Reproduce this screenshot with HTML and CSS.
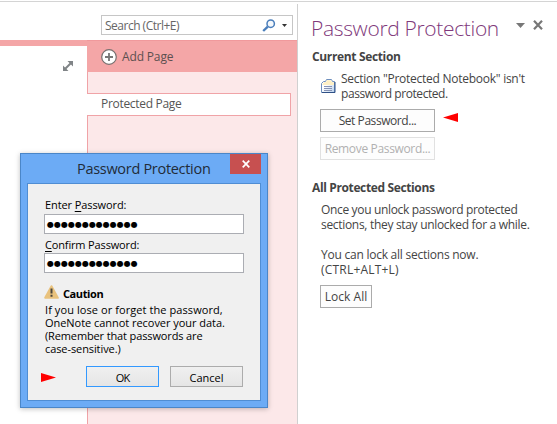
FILE: index.html
```html
<!DOCTYPE html>
<html lang="en">
<head>
<meta charset="utf-8">
<title>Password Protection</title>
<link rel="stylesheet" href="styles.css">
</head>
<body>
<div class="app">
  <main class="notebook">
    <div class="toolbar">
      <div class="search">
        <span class="search-text">Search (Ctrl+E)</span>
        <svg class="search-icon" width="14" height="13" viewBox="0 0 14 13"><circle cx="8.7" cy="4.7" r="3.7" fill="#f4f8fc" stroke="#4a7ebb" stroke-width="1.5"/><path d="M5.8 7.6L1.2 12" stroke="#4a7ebb" stroke-width="2.4"/></svg>
        <svg class="search-caret" width="5" height="3" viewBox="0 0 5 3"><path d="M0 0h5L2.5 3z" fill="#333"/></svg>
      </div>
    </div>
    <div class="workspace">
      <section class="canvas">
        <svg width="12" height="12" viewBox="0 0 12 12"><path d="M2.5 9.5l7-7" stroke="#808487" stroke-width="2"/><path d="M5.5 1H11v5.5zM1 5.5V11h5.5z" fill="#808487"/></svg>
      </section>
      <aside class="pages">
        <div class="add-page">
          <svg width="16" height="16" viewBox="0 0 16 16"><circle cx="8" cy="8" r="7.3" fill="#fff" stroke="#77706f" stroke-width="1.2"/><path d="M8 4v8M4 8h8" stroke="#777" stroke-width="1.8"/></svg>
          <span class="add-text">Add Page</span>
        </div>
        <div class="page-list"><div class="page-tab">Protected Page</div></div>
      </aside>
    </div>
  </main>

  <aside class="pane">
    <header class="pane-head">
      <h1>Password Protection</h1>
      <svg class="pane-caret" width="9" height="5" viewBox="0 0 9 5"><path d="M0 0h9L4.5 5z" fill="#777"/></svg>
      <svg class="pane-close" width="10" height="10" viewBox="0 0 10 10"><path d="M1 .8l8 8.4M9 .8L1 9.2" stroke="#777" stroke-width="2.2"/></svg>
    </header>
    <h2 class="current">Current Section</h2>
    <div class="status">
      <svg width="15" height="15" viewBox="0 0 15 15"><defs><linearGradient id="g" x1="0" y1="0" x2="1" y2="1"><stop offset=".4" stop-color="#fff"/><stop offset="1" stop-color="#b5cdea"/></linearGradient></defs><path d="M.5 13.500V4.500L2.500 2.500H4.500L5.500.5H10.500L11.500 2.500H13.500V13.500z" fill="url(#g)" stroke="#6e8fbd"/><path d="M1.500 5L3 3.200H5L6 1.300h4l1 1.900h2V6H1.500z" fill="#fff0c4"/><path d="M3 7.500h8M3 9.500h8M3 11.500h8" stroke="#8793b4"/><path d="M1 13.500h13V3" fill="none" stroke="#2f5086"/></svg>
      <p><span class="s-name">Section "Protected Notebook" isn't</span><br><span class="s-state">password protected.</span></p>
    </div>
    <div class="set-row">
      <button class="btn set">Set Password...</button>
      <svg width="15" height="9" viewBox="0 0 15 9"><path d="M0 4.500L15 0v9z" fill="#f00"/></svg>
    </div>
    <button class="btn remove" disabled>Remove Password...</button>
    <h2 class="all">All Protected Sections</h2>
    <p class="info"><span class="i-once">Once you unlock password protected</span><br><span class="i-stay">sections, they stay unlocked for a while.</span></p>
    <p class="info second"><span class="i-lock">You can lock all sections now.</span><br><span class="i-keys">(CTRL+ALT+L)</span></p>
    <button class="btn lock">Lock All</button>
  </aside>
</div>

<div class="dialog" role="dialog">
  <div class="titlebar">
    <div class="dialog-title">Password Protection</div>
    <div class="dialog-close"><svg width="8" height="8" viewBox="0 0 8 8"><path d="M.7.700l6.600 6.600M7.300.700L.7 7.300" stroke="#fff" stroke-width="1.700"/></svg></div>
  </div>
  <div class="dialog-body">
    <label class="enter">Enter <u>P</u>assword:</label>
    <div class="field">●●●●●●●●●●●●●</div>
    <label class="confirm"><u>C</u>onfirm Password:</label>
    <div class="field">●●●●●●●●●●●●●</div>
    <div class="caution">
      <svg width="15" height="14" viewBox="0 0 15 14"><path d="M7.500 1.200L13.800 12.800H1.200z" fill="#e9c27d" stroke="#e9c27d" stroke-width="2" stroke-linejoin="round"/><path d="M7.500 3.500v5M7.500 9.800v2" stroke="#4c463c" stroke-width="2"/></svg>
      <strong>Caution</strong>
    </div>
    <p class="warning"><span class="w-lose">If you lose or forget the password,</span><br><span class="w-data">OneNote cannot recover your data.</span><br><span class="w-rem">(Remember that passwords are</span><br><span class="w-case">case-sensitive.)</span></p>
    <div class="actions">
      <svg width="15" height="9" viewBox="0 0 15 9"><path d="M15 4.500L0 0v9z" fill="#f00"/></svg>
      <button class="action ok">OK</button>
      <button class="action">Cancel</button>
    </div>
  </div>
</div>
</body>
</html>
```
FILE: styles.css
```css
* { box-sizing: border-box; }
body {
  margin: 0;
  width: 557px;
  height: 424px;
  overflow: hidden;
  background: #fff;
  color: #444;
  font: 12px/15px "Open Sans", "Noto Sans", sans-serif;
}
h1, h2, p { margin: 0; }
svg { display: block; flex: none; }
button { font: inherit; color: inherit; padding: 0; white-space: nowrap; }
span, label, strong, h1, h2 { white-space: nowrap; }

.app {
  display: grid;
  grid-template-columns: 297px 260px;
  grid-template-rows: 3px 420px;
  height: 424px;
  padding-top: 1px;
}
.app::before {
  content: "";
  grid-column: 1 / 3;
  height: 1px;
  background: #d4d4d4;
}

/* Notebook area */
.notebook { display: flex; flex-direction: column; }
.toolbar { height: 36px; padding: 11px 4px 0 101px; }
.search {
  display: flex;
  align-items: center;
  height: 20px;
  border: 1px solid #c6c6c6;
  padding: 0 5px 0 3px;
  color: #666;
}
.search-text { flex: 1; letter-spacing: -.5px; }
.search-caret { margin: 1px 0 0 6px; }
.workspace { flex: 1; display: flex; }
.canvas {
  width: 87px;
  border-top: 6px solid #f4a6a7;
  padding: 14px 0 0 62px;
}
.pages { flex: 1; display: flex; flex-direction: column; }
.add-page {
  display: flex;
  align-items: center;
  gap: 5px;
  height: 32px;
  padding: 0 0 0 14px;
  background: #f4a6a7;
  border-top: 1px solid #f0999c;
  color: #5c5050;
}
.add-text { letter-spacing: -.15px; }
.page-list {
  flex: 1;
  background: #fce8e9;
  border-left: 1px solid #f0a3a7;
  padding: 21px 6px 0 0;
}
.page-tab {
  height: 23px;
  margin-left: -1px;
  padding-left: 14px;
  border: 1px solid #f0a3a7;
  border-left: 0;
  background: #fff;
  line-height: 20px;
  letter-spacing: -.31px;
  color: #555;
}

/* Task pane */
.pane {
  display: flex;
  flex-direction: column;
  align-items: flex-start;
  border-left: 1px solid #d0d0d0;
  padding-left: 14px;
}
.pane-head { display: flex; height: 42px; padding-top: 10px; }
h1 {
  width: 205px;
  font-size: 21px;
  font-weight: 300;
  line-height: 28px;
  letter-spacing: -.34px;
  color: #80397b;
  margin-left: -1px;
}
.pane-caret { margin-top: 9px; }
.pane-close { margin: 6px 0 0 8px; }
h2 { font-size: 12px; line-height: 15px; font-weight: 700; color: #444; }
.current { margin-top: 3px; letter-spacing: -.35px; }
.status { display: flex; gap: 5px; margin: 7px 0 0 9px; }
.status svg { margin-top: 8px; }
.s-name { letter-spacing: -.26px; }
.s-state { letter-spacing: -.44px; }
.set-row { display: flex; gap: 8px; margin: 8px 0 0 8px; }
.set-row svg { margin-top: 4px; }
.btn {
  height: 23px;
  border: 1px solid #ababab;
  background: #fdfdfd;
  line-height: 21px;
}
.set { width: 115px; letter-spacing: -.44px; }
.remove {
  width: 115px;
  margin: 5px 0 0 8px;
  border-color: #e1e1e1;
  color: #b1b1b1;
  letter-spacing: -.34px;
}
.all { margin-top: 20px; letter-spacing: -.37px; }
.info { margin: 7px 0 0 9px; }
.second { margin-top: 15px; }
.i-once { letter-spacing: -.34px; }
.i-stay { letter-spacing: -.31px; }
.i-lock { letter-spacing: -.24px; }
.i-keys { letter-spacing: .2px; }
.lock { width: 52px; margin: 8px 0 0 8px; letter-spacing: .05px; }

/* Dialog window over the notebook */
.dialog {
  position: absolute;
  left: 20px;
  top: 153px;
  width: 248px;
  height: 255px;
  padding: 0 6px 6px;
  border: 1px solid #4a86c8;
  background: #6cabf5;
  box-shadow: 0 1px 5px rgba(0, 0, 0, .25);
  color: #000;
}
.titlebar { display: flex; justify-content: space-between; height: 29px; }
.dialog-title {
  padding: 5px 0 0 50px;
  font-size: 14.5px;
  line-height: 20px;
  letter-spacing: -.3px;
  color: #222b38;
}
.dialog-close {
  display: grid;
  place-items: center;
  width: 31px;
  height: 20px;
  background: #c75050;
}
.dialog-body {
  display: flex;
  flex-direction: column;
  height: 218px;
  border: 1px solid #4f8dd3;
  padding: 13px 16px 0;
  background: #f0f0f0;
  font-size: 11px;
  line-height: 15px;
}
.dialog-body label { margin-left: 1px; }
u { text-underline-offset: 2px; text-decoration-thickness: 1px; }
.enter { letter-spacing: -.1px; }
.confirm { letter-spacing: -.15px; margin-top: 3px; }
.field {
  flex: none;
  height: 20px;
  width: 200px;
  margin-top: 2px;
  padding-left: 2px;
  border: 1px solid #abadb3;
  background: #fff;
  font: 8px/20px "DejaVu Sans", sans-serif;
}
.confirm + .field { margin-top: 1px; }
.caution { display: flex; gap: 4px; margin-top: 12px; }
.caution strong { padding-top: 1px; letter-spacing: -.39px; }
.warning { margin: 2px 0 0 1px; line-height: 13px; }
.w-lose { letter-spacing: .08px; }
.w-data { letter-spacing: -.04px; }
.w-rem { letter-spacing: -.13px; }
.w-case { letter-spacing: -.09px; }
.actions { display: flex; margin: 11px 0 0 -3px; }
.actions svg { margin: 7px 30px 0 0; }
.action {
  width: 73px;
  height: 21px;
  border: 1px solid #acacac;
  background: linear-gradient(#f0f0f0, #e5e5e5);
  line-height: 19px;
  padding-top: 1px;
}
.ok { margin-right: 11px; border-color: #3399ff; letter-spacing: -.8px; }
```
